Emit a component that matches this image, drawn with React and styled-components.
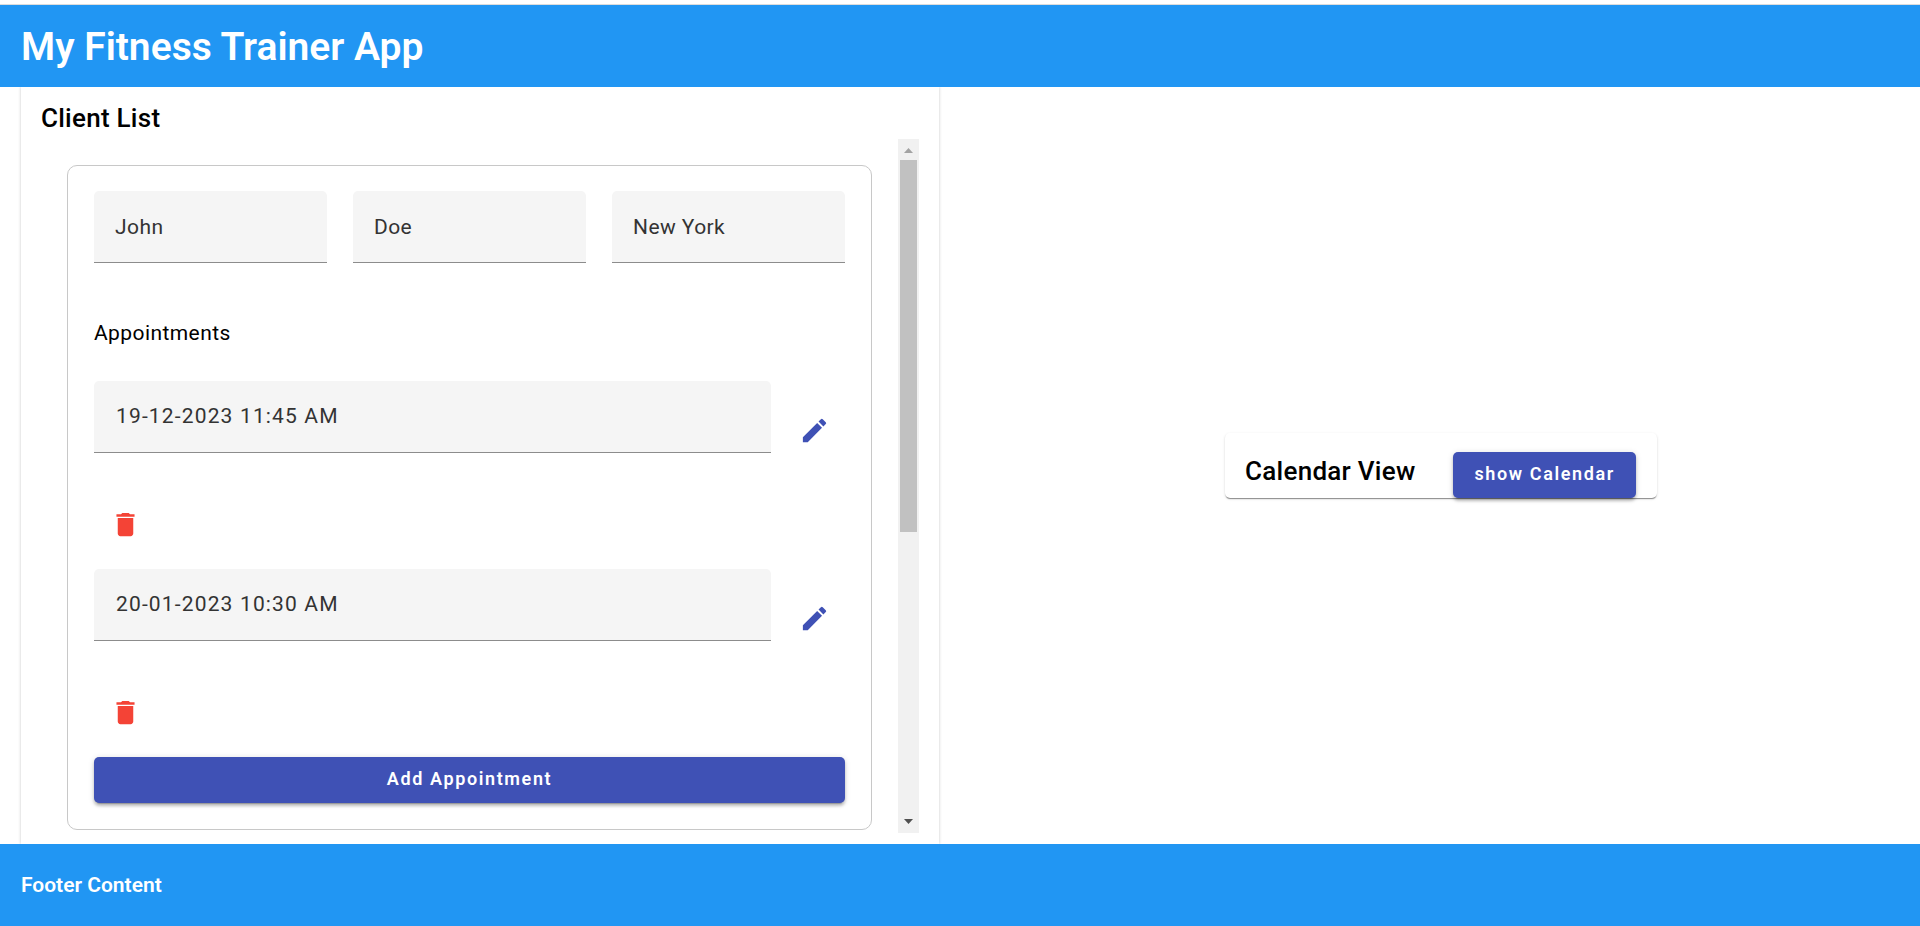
import React from "react";
import styled, { createGlobalStyle } from "styled-components";
import { MdDelete, MdEdit } from "react-icons/md";

const GlobalStyle = createGlobalStyle`
  *, *::before, *::after { box-sizing: border-box; }
  body {
    margin: 0;
    background: #fff;
    color: #000;
    font-family: Roboto, "Liberation Sans", sans-serif;
  }
`;

const Page = styled.div`
  display: flex;
  flex-direction: column;
  min-height: 100vh;
  padding-top: 4px;
`;

const Header = styled.header`
  border-top: 1px solid #dcdcdc;
  background: #2196f3;
  color: #fff;
  padding: 17px 21px 15px;
`;

const AppTitle = styled.h1`
  margin: 0;
  font-size: 39px;
  font-weight: 600;
  line-height: 50px;
`;

const Main = styled.main`
  flex: 1;
  display: grid;
  grid-template-columns: 1fr 1fr;
`;

const cardShadow = `
  0 2px 1px -1px rgba(0, 0, 0, 0.3),
  0 1px 1px 0 rgba(0, 0, 0, 0.14),
  0 1px 3px 0 rgba(0, 0, 0, 0.12)
`;

const ClientPanel = styled.section`
  display: flex;
  flex-direction: column;
  margin: 0 21px;
  padding: 10px 20px 11px;
  box-shadow: 0 0 3px rgba(0, 0, 0, 0.22);
  clip-path: inset(0 -4px);
`;

const PanelTitle = styled.h2`
  margin: 0;
  font-size: 26px;
  font-weight: 500;
  line-height: 42px;
  letter-spacing: 0.01em;
  white-space: nowrap;
`;

const ScrollArea = styled.div`
  flex: 1;
  display: flex;
`;

const ClientList = styled.div`
  flex: 1;
  min-width: 0;
  padding: 26px 26px 3px;
`;

const ClientCard = styled.form`
  border: 1px solid #c8c8c8;
  border-radius: 10px;
  padding: 25px 26px 26px;
`;

const NameRow = styled.div`
  display: grid;
  grid-template-columns: repeat(3, 1fr);
  gap: 26px;
`;

const Field = styled.input`
  display: block;
  width: 100%;
  min-width: 0;
  height: 72px;
  padding: 0 21px;
  border: 0;
  border-bottom: 1px solid #8c8c8c;
  border-radius: 5px 5px 0 0;
  background: #f5f5f5;
  color: #333;
  font-family: inherit;
  font-size: 21px;
  letter-spacing: 0.02em;
  outline: none;
`;

const SectionLabel = styled.h3`
  margin: 55px 0 33px;
  font-size: 21px;
  font-weight: 400;
  line-height: 30px;
  letter-spacing: 0.02em;
`;

const AppointmentRow = styled.div`
  display: grid;
  grid-template-columns: 1fr 62px;
  column-gap: 12px;
  grid-template-rows: 98px 90px;
`;

const AppointmentField = styled(Field)`
  padding: 0 22px 1px;
  letter-spacing: 0.055em;
`;

const IconButton = styled.button`
  display: flex;
  align-items: center;
  justify-content: center;
  align-self: center;
  width: 62px;
  height: 62px;
  padding: 0;
  border: 0;
  border-radius: 50%;
  background: transparent;
  color: ${({ $tone }) => ($tone === "warn" ? "#f44336" : "#3f51b5")};
  font-size: 31px;
  cursor: pointer;
`;

const RaisedButton = styled.button`
  display: block;
  width: ${({ $wide }) => ($wide ? "100%" : "auto")};
  height: 46px;
  padding: 0 21px 4px;
  border: 0;
  border-radius: 5px;
  background: #3f51b5;
  color: #fff;
  font-family: inherit;
  font-size: 18px;
  font-weight: 600;
  letter-spacing: 0.09em;
  white-space: nowrap;
  cursor: pointer;
  box-shadow:
    0 4px 1px -3px rgba(0, 0, 0, 0.2),
    0 3px 3px 0 rgba(0, 0, 0, 0.2),
    0 1px 6px 0 rgba(0, 0, 0, 0.14);
`;

const ScrollBar = styled.div`
  width: 21px;
  display: flex;
  flex-direction: column;
  background: #f1f1f1;
`;

const ScrollArrow = styled.svg`
  display: block;
  width: 21px;
  height: 21px;
  fill: ${({ $active }) => ($active ? "#505050" : "#a3a3a3")};
`;

const ScrollTrack = styled.div`
  flex: 1;
  padding: 0 2px;
`;

const ScrollThumb = styled.div`
  height: 57%;
  background: #c1c1c1;
`;

const CalendarPane = styled.section`
  display: flex;
  align-items: center;
  justify-content: center;
  padding-left: 2px;
`;

const CalendarCard = styled.div`
  display: flex;
  align-items: baseline;
  gap: 38px;
  padding: 17px 21px 0 20px;
  border-radius: 5px;
  box-shadow: ${cardShadow};
`;

const Footer = styled.footer`
  background: #2196f3;
  color: #fff;
  padding: 26px 21px;
  font-size: 21px;
  font-weight: 600;
  line-height: 30px;
`;

const client = {
  fields: [
    { label: "First name", value: "John" },
    { label: "Last name", value: "Doe" },
    { label: "Location", value: "New York" },
  ],
  appointments: ["19-12-2023 11:45 AM", "20-01-2023 10:30 AM"],
};

function Appointment({ value }) {
  return (
    <AppointmentRow>
      <AppointmentField aria-label="Appointment" defaultValue={value} readOnly />
      <IconButton type="button" aria-label="Edit appointment">
        <MdEdit />
      </IconButton>
      <IconButton type="button" $tone="warn" aria-label="Delete appointment">
        <MdDelete />
      </IconButton>
    </AppointmentRow>
  );
}

export default function App() {
  return (
    <>
      <GlobalStyle />
      <Page>
        <Header>
          <AppTitle>My Fitness Trainer App</AppTitle>
        </Header>
        <Main>
          <ClientPanel>
            <PanelTitle>Client List</PanelTitle>
            <ScrollArea>
              <ClientList>
                <ClientCard>
                  <NameRow>
                    {client.fields.map(({ label, value }) => (
                      <Field key={label} aria-label={label} defaultValue={value} readOnly />
                    ))}
                  </NameRow>
                  <SectionLabel>Appointments</SectionLabel>
                  {client.appointments.map((value) => (
                    <Appointment key={value} value={value} />
                  ))}
                  <RaisedButton type="button" $wide>
                    Add Appointment
                  </RaisedButton>
                </ClientCard>
              </ClientList>
              <ScrollBar aria-hidden="true">
                <ScrollArrow viewBox="0 0 21 21">
                  <path d="M6 14h9l-4.5-5z" />
                </ScrollArrow>
                <ScrollTrack>
                  <ScrollThumb />
                </ScrollTrack>
                <ScrollArrow viewBox="0 0 21 21" $active>
                  <path d="M6 7h9l-4.5 5z" />
                </ScrollArrow>
              </ScrollBar>
            </ScrollArea>
          </ClientPanel>
          <CalendarPane>
            <CalendarCard>
              <PanelTitle>Calendar View</PanelTitle>
              <RaisedButton type="button">show Calendar</RaisedButton>
            </CalendarCard>
          </CalendarPane>
        </Main>
        <Footer>Footer Content</Footer>
      </Page>
    </>
  );
}
